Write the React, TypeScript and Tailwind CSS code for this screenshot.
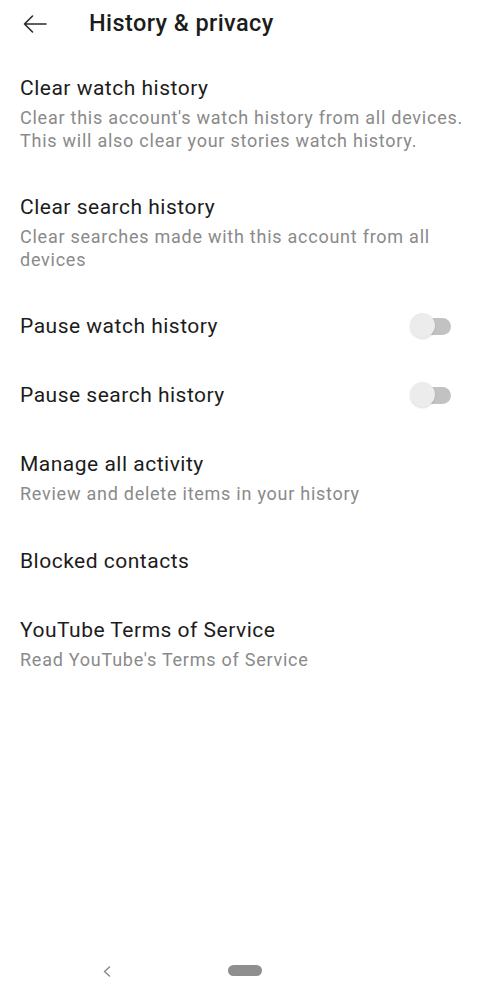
import React from 'react'

type Item = {
  title: string
  subtitle?: string
  toggle?: boolean
}

const items: Item[] = [
  {
    title: 'Clear watch history',
    subtitle: "Clear this account's watch history from all devices. This will also clear your stories watch history.",
  },
  {
    title: 'Clear search history',
    subtitle: 'Clear searches made with this account from all devices',
  },
  { title: 'Pause watch history', toggle: true },
  { title: 'Pause search history', toggle: true },
  { title: 'Manage all activity', subtitle: 'Review and delete items in your history' },
  { title: 'Blocked contacts' },
  { title: 'YouTube Terms of Service', subtitle: "Read YouTube's Terms of Service" },
]

function Toggle() {
  return (
    <div className="relative w-[42px] h-[26px] flex items-center mr-[18px]">
      <div className="ml-[9px] w-[32px] h-[17px] rounded-full bg-[#c2c2c2]" />
      <div className="absolute left-0 top-0 w-[25px] h-[25px] rounded-full bg-[#ececec] shadow-[0_1px_2px_rgba(0,0,0,0.15)]" />
    </div>
  )
}

export default function App() {
  return (
    <div className="w-[490px] h-[1000px] bg-white flex flex-col font-['Roboto',sans-serif] text-[#1c1c1c]">
      {/* Header */}
      <header className="h-[47px] flex items-center px-[23px] gap-[42px]">
        <svg width="24" height="18" viewBox="0 0 24 18" fill="none" stroke="#2a2a2a" strokeWidth="1.6" strokeLinecap="round" strokeLinejoin="round">
          <path d="M23 9H1.5M9.5 1L1.5 9l8 8" />
        </svg>
        <h1 className="text-[23.5px] font-medium tracking-[0.4px]">History &amp; privacy</h1>
      </header>

      {/* List */}
      <div className="flex flex-col pt-[6.5px]">
        {items.map((item) => (
          <div key={item.title} className="flex items-center justify-between pl-[20px] pr-[20px] py-[20.5px]">
            <div className="flex flex-col">
              <div className="text-[21px] leading-[28px] tracking-[0.5px]">{item.title}</div>
              {item.subtitle && (
                <div className="mt-[5px] text-[18px] leading-[22.5px] tracking-[0.75px] text-[#8a8a8a]">{item.subtitle}</div>
              )}
            </div>
            {item.toggle && <Toggle />}
          </div>
        ))}
      </div>

      <div className="flex-1" />

      {/* Nav bar */}
      <div className="h-[60px] flex items-start pt-[25px]">
        <div className="w-[103px]" />
        <svg width="8" height="11" viewBox="0 0 8 11" fill="none" stroke="#8a8a8a" strokeWidth="1.5" strokeLinecap="round" strokeLinejoin="round" className="mt-[1px]">
          <path d="M6.5 1L1.5 5.5l5 4.5" />
        </svg>
        <div className="w-[117px]" />
        <div className="w-[34px] h-[11px] rounded-full bg-[#8f8f8f]" />
      </div>
    </div>
  )
}
